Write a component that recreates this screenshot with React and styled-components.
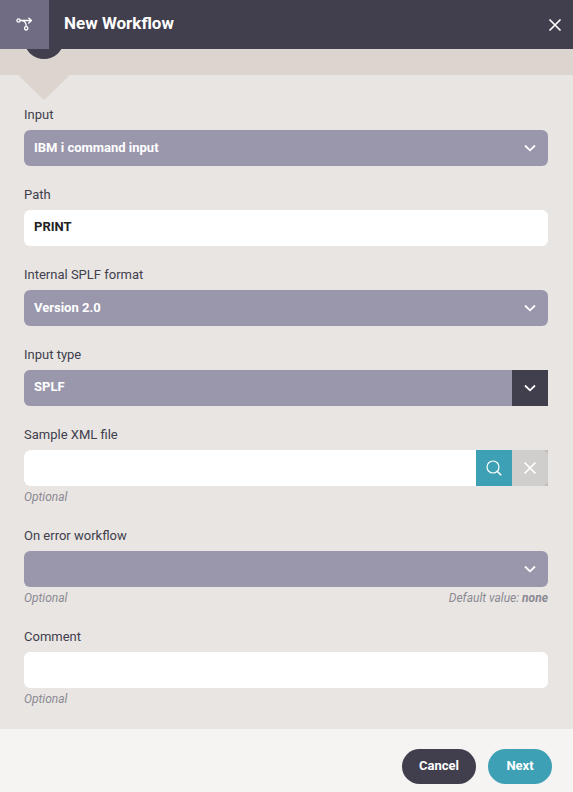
import React, { useState } from "react";
import styled, { createGlobalStyle, css } from "styled-components";

const colors = {
  ink: "#413e4d",
  slate: "#6f6c84",
  lavender: "#9a97ad",
  teal: "#3ea0b4",
  sand: "#dcd4cf",
  panel: "#e8e5e2",
  footer: "#f5f4f3",
  hint: "#8b8993",
};

const GlobalStyle = createGlobalStyle`
  *, *::before, *::after { box-sizing: border-box; }
  body {
    margin: 0;
    font-family: Roboto, "Liberation Sans", sans-serif;
    font-size: 13px;
    color: ${colors.ink};
    background: ${colors.footer};
  }
  button, input, select { font: inherit; margin: 0; border: 0; }
  button { cursor: pointer; }
`;

const Dialog = styled.main`
  display: flex;
  flex-direction: column;
  min-height: 100vh;
`;

const Header = styled.header`
  display: flex;
  align-items: center;
  height: 49px;
  background: ${colors.ink};
  color: #fff;
`;

const HeaderIcon = styled.div`
  display: flex;
  align-items: center;
  justify-content: center;
  width: 49px;
  height: 100%;
  background: ${colors.slate};
`;

const Title = styled.h1`
  flex: 1;
  margin: 0;
  padding: 0 15px 4px;
  font-size: 17px;
  line-height: 24px;
  font-weight: 700;
`;

const CloseButton = styled.button`
  display: flex;
  align-items: center;
  justify-content: center;
  width: 36px;
  height: 100%;
  padding: 0;
  background: transparent;
  color: #fff;
`;

const Steps = styled.div`
  position: relative;
  height: 26px;
  background: ${colors.sand};

  &::after {
    content: "";
    position: absolute;
    top: 100%;
    left: 18px;
    border-style: solid;
    border-width: 25px 26px 0;
    border-color: ${colors.sand} transparent transparent;
  }
`;

const StepTrack = styled.div`
  display: flex;
  align-items: flex-end;
  height: 100%;
  padding: 0 24px 16px;
  overflow: hidden;
`;

const StepDot = styled.span`
  flex: none;
  width: 40px;
  height: 40px;
  border-radius: 50%;
  background: ${colors.ink};
`;

const Form = styled.form`
  display: flex;
  flex-direction: column;
  gap: 19px;
  padding: 30px 25px 20px 24px;
  background: ${colors.panel};
`;

const FieldBox = styled.div`
  display: flex;
  flex-direction: column;
`;

const Label = styled.label`
  margin-bottom: 5px;
  line-height: 20px;
`;

const ControlRow = styled.div`
  position: relative;
  display: flex;
  height: 36px;
  border-radius: ${(p) => (p.$squareEnd ? "6px 0 0 6px" : "6px")};
  background: #c1bcb8;
  overflow: hidden;
`;

const controlStyle = css`
  flex: 1;
  min-width: 0;
  height: 36px;
  border-radius: 0;
  font-weight: 700;
  outline-offset: -2px;
`;

const TextInput = styled.input`
  ${controlStyle}
  padding: 0 10px 4px;
  background: ${(p) => (p.$filled ? colors.lavender : "#fff")};
  color: ${(p) => (p.$filled ? "#fff" : "#222")};
`;

const Select = styled.select`
  ${controlStyle}
  padding: 0 36px 2px 10px;
  appearance: none;
  background: ${colors.lavender};
  color: #fff;
`;

const SelectArrow = styled.span`
  position: absolute;
  top: 0;
  right: 0;
  display: flex;
  align-items: center;
  justify-content: center;
  width: 36px;
  height: 36px;
  color: #fff;
  pointer-events: none;
`;

const buttonTones = {
  dark: colors.ink,
  teal: colors.teal,
  muted: "#d0cecc",
};

const AddonButton = styled.button`
  display: flex;
  align-items: center;
  justify-content: center;
  width: 36px;
  height: 36px;
  padding: 0;
  border-radius: ${(p) => (p.$tone === "muted" ? "0 6px 6px 0" : "0")};
  background: ${(p) => buttonTones[p.$tone]};
  color: #fff;
`;

const Hints = styled.div`
  display: flex;
  justify-content: space-between;
  margin-top: 2px;
  font-size: 12px;
  line-height: 19px;
  font-style: italic;
  color: ${colors.hint};
`;

const Footer = styled.footer`
  flex: 1;
  display: flex;
  align-items: flex-start;
  justify-content: flex-end;
  gap: 12px;
  padding: 20px 21px 8px;
  background: ${colors.footer};
`;

const PillButton = styled.button`
  height: 35px;
  padding: 0 17px 2px;
  min-width: 64px;
  border-radius: 18px;
  background: ${(p) => buttonTones[p.$tone]};
  color: #fff;
  font-weight: 700;
`;

const WorkflowIcon = () => (
  <svg width="18" height="17" viewBox="0 0 18 17" fill="none" stroke="#fff" strokeWidth="1.3" strokeLinecap="round" strokeLinejoin="round" aria-hidden="true">
    <circle cx="2.5" cy="4.5" r="1.6" />
    <path d="M4.3 4.5H15.4M12.7 2.1 15.5 4.5l-2.8 2.6M6 4.7C8.8 5.2 10.2 6.8 10.2 10.4" />
    <circle cx="10.2" cy="12.3" r="1.7" />
  </svg>
);

const CrossIcon = () => (
  <svg width="14" height="14" viewBox="0 0 14 14" fill="none" stroke="currentColor" strokeWidth="1.7" aria-hidden="true">
    <path d="M1.5 1.5 12.5 12.5M12.5 1.5 1.5 12.5" />
  </svg>
);

const ChevronIcon = () => (
  <svg width="12" height="8" viewBox="0 0 12 8" fill="none" stroke="currentColor" strokeWidth="1.8" aria-hidden="true">
    <path d="M1 1.5 6 6.3 11 1.5" />
  </svg>
);

const SearchIcon = () => (
  <svg width="16" height="16" viewBox="0 0 16 16" fill="none" stroke="currentColor" strokeWidth="1.2" aria-hidden="true">
    <circle cx="7" cy="7" r="6" />
    <path d="m11.2 11.2 4 4" strokeWidth="1.6" />
  </svg>
);

function Field({ id, label, hint, note, squareEnd, children }) {
  return (
    <FieldBox>
      <Label htmlFor={id}>{label}</Label>
      <ControlRow $squareEnd={squareEnd}>{children}</ControlRow>
      {hint && (
        <Hints>
          <span>{hint}</span>
          {note}
        </Hints>
      )}
    </FieldBox>
  );
}

function SelectField({ id, options, ...field }) {
  return (
    <Field id={id} {...field}>
      <Select id={id}>
        {options.map((option) => (
          <option key={option}>{option}</option>
        ))}
      </Select>
      <SelectArrow>
        <ChevronIcon />
      </SelectArrow>
    </Field>
  );
}

export default function App() {
  const [sample, setSample] = useState("");

  return (
    <>
      <GlobalStyle />
      <Dialog>
        <Header>
          <HeaderIcon>
            <WorkflowIcon />
          </HeaderIcon>
          <Title>New Workflow</Title>
          <CloseButton type="button" aria-label="Close">
            <CrossIcon />
          </CloseButton>
        </Header>
        <Steps>
          <StepTrack>
            <StepDot />
          </StepTrack>
        </Steps>
        <Form id="workflow" onSubmit={(e) => e.preventDefault()}>
          <SelectField id="input" label="Input" options={["IBM i command input"]} />
          <Field id="path" label="Path">
            <TextInput id="path" defaultValue="PRINT" />
          </Field>
          <SelectField id="format" label="Internal SPLF format" options={["Version 2.0"]} />
          <Field id="type" label="Input type" squareEnd>
            <TextInput id="type" defaultValue="SPLF" $filled />
            <AddonButton type="button" $tone="dark" aria-label="Show input types">
              <ChevronIcon />
            </AddonButton>
          </Field>
          <Field id="sample" label="Sample XML file" hint="Optional" squareEnd>
            <TextInput id="sample" value={sample} onChange={(e) => setSample(e.target.value)} />
            <AddonButton type="button" $tone="teal" aria-label="Browse">
              <SearchIcon />
            </AddonButton>
            <AddonButton type="button" $tone="muted" aria-label="Clear" onClick={() => setSample("")}>
              <CrossIcon />
            </AddonButton>
          </Field>
          <SelectField
            id="error"
            label="On error workflow"
            options={[""]}
            hint="Optional"
            note={
              <span>
                Default value: <strong>none</strong>
              </span>
            }
          />
          <Field id="comment" label="Comment" hint="Optional">
            <TextInput id="comment" />
          </Field>
        </Form>
        <Footer>
          <PillButton type="button" $tone="dark">Cancel</PillButton>
          <PillButton type="submit" form="workflow" $tone="teal">Next</PillButton>
        </Footer>
      </Dialog>
    </>
  );
}
